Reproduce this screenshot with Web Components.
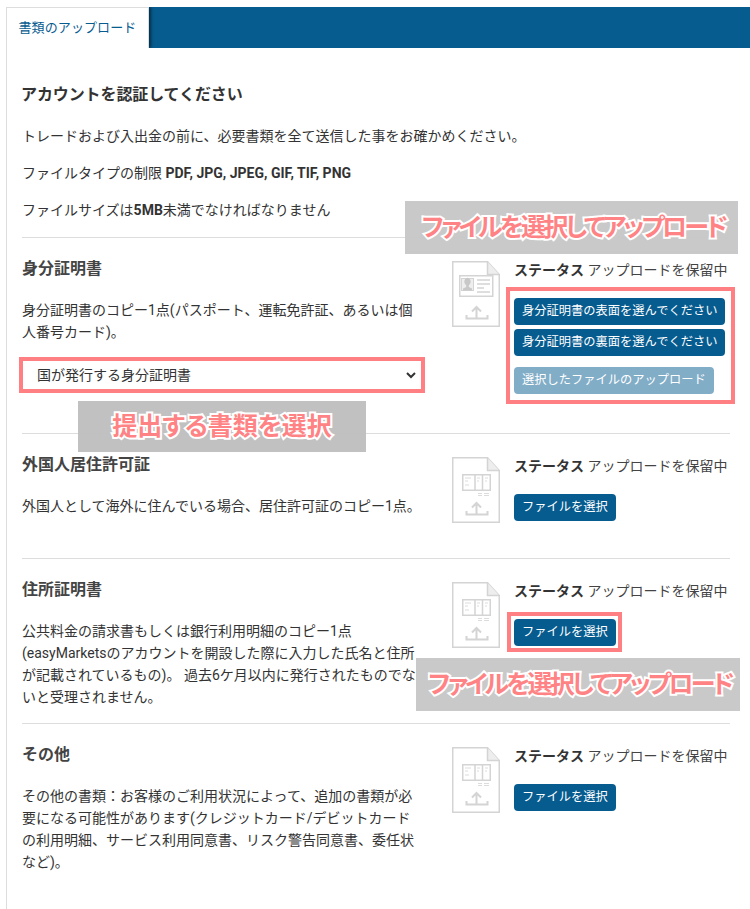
<!DOCTYPE html>
<html lang="ja">
<head>
<meta charset="utf-8">
<title>書類のアップロード</title>
<style>
    html, body { margin: 0; padding: 0; background: #fff; }
    body { font-family: Roboto, "Noto Sans CJK JP", sans-serif; color: #333; overflow: hidden; }
</style>
</head>
<body>
<doc-page>
    <doc-tabs slot="tabs" label="書類のアップロード"></doc-tabs>

    <doc-intro heading="アカウントを認証してください">
        <p>トレードおよび入出金の前に、必要書類を全て送信した事をお確かめください。</p>
        <p>ファイルタイプの制限 <b>PDF, JPG, JPEG, GIF, TIF, PNG</b></p>
        <p>ファイルサイズは<b>5MB</b>未満でなければなりません</p>
    </doc-intro>

    <doc-section heading="身分証明書" style="height:196px" icon="id">
        身分証明書のコピー1点(パスポート、運転免許証、あるいは個人番号カード)。
        <doc-select slot="extra" value="国が発行する身分証明書"></doc-select>
        <doc-actions slot="actions" marked="wide">
            <file-button>身分証明書の表面を選んでください</file-button>
            <file-button>身分証明書の裏面を選んでください</file-button>
            <file-button muted>選択したファイルのアップロード</file-button>
        </doc-actions>
    </doc-section>

    <doc-section heading="外国人居住許可証" icon="table" style="height:125px">
        外国人として海外に住んでいる場合、居住許可証のコピー1点。
        <doc-actions slot="actions">
            <file-button>ファイルを選択</file-button>
        </doc-actions>
    </doc-section>

    <doc-section heading="住所証明書" icon="table" style="height:165px">
        公共料金の請求書もしくは銀行利用明細のコピー1点 (easyMarketsのアカウントを開設した際に入力した氏名と住所が記載されているもの)。 過去6ケ月以内に発行されたものでないと受理されません。
        <doc-actions slot="actions" marked="narrow">
            <file-button>ファイルを選択</file-button>
        </doc-actions>
    </doc-section>

    <doc-section heading="その他" icon="table">
        その他の書類：お客様のご利用状況によって、追加の書類が必要になる可能性があります(クレジットカード/デビットカードの利用明細、サービス利用同意書、リスク警告同意書、委任状など)。
        <doc-actions slot="actions">
            <file-button>ファイルを選択</file-button>
        </doc-actions>
    </doc-section>

    <call-out slot="over" x="405" y="201" w="333" h="53" shade="#c8c8c8" tight>ファイルを選択してアップロード</call-out>
    <call-out slot="over" x="78" y="401" w="288" h="51" shade="#c0c0c0">提出する書類を選択</call-out>
    <call-out slot="over" x="416" y="658" w="324" h="53" shade="#c8c8c8" tight>ファイルを選択してアップロード</call-out>
</doc-page>

<script>
const ICON_FRAME = `
    <path d="M.75.75H35.5L47.25 13.5V65.25H.75Z"/>
    <path d="M35.5.75V13.5H47.25" fill="#eee"/>`;
const ICON_UPLOAD = `
    <path d="M24.5 57V46M20 50.5l4.5-4.5 4.5 4.5" stroke-width="2"/>
    <path d="M14.5 54v3.5h21V54" stroke-width="2"/>`;
const ICON_ART = {
    id: `
        <rect x="7.75" y="14.75" width="33" height="20.5" stroke-width="1.5"/>
        <rect x="9.5" y="17.5" width="12" height="12" fill="#eee" stroke-width="1"/>
        <path d="M11 29.5v-2l3.2-1.6v-1.6a3.2 4 0 1 1 2.6 0v1.6l3.2 1.6v2Z" fill="#c8c8c8" stroke="none"/>
        <path d="M25 19h13M25 23h13M25 27h7M25 31h13" stroke-width="1.6"/>`,
    table: `
        <rect x="10.75" y="17.75" width="27.5" height="15.5" stroke-width="1.5"/>
        <path d="M23 18v15M30.5 18v15" stroke-width="1.5"/>
        <path d="M13 21h6M13 24h3M13 28h4M25 21h3M25 24h2M33 21h3M33 24h2" stroke="#dcdcdc" stroke-width="1"/>
        <path d="M26 36.5h4M32 36.5h5M26 38.5h4M32 38.5h5" stroke="#dcdcdc" stroke-width="1"/>`
};

class DocPage extends HTMLElement {
    constructor(){
        super();
        this.attachShadow({ mode: 'open' });
        this.shadowRoot.innerHTML = `
            <style>
                :host { display: block; position: relative; width: 750px; height: 909px; padding-top: 7px; box-sizing: border-box; }
                #panel { margin-left: 6px; height: 861px; border-left: 1px solid #ddd; padding: 0 20px 0 15px; box-sizing: border-box; }
            </style>
            <slot name="tabs"></slot>
            <section id="panel"><slot></slot></section>
            <slot name="over"></slot>
        `;
    }
}

class DocTabs extends HTMLElement {
    constructor(){
        super();
        this.attachShadow({ mode: 'open' });
        this.shadowRoot.innerHTML = `
            <style>
                :host { display: flex; height: 41px; margin-left: 6px; background: #075c8f; overflow: hidden; }
                #tab {
                    width: 143px; box-sizing: border-box; padding-left: 11.5px;
                    background: #fff; color: #075c8f;
                    border: solid #ddd; border-width: 1px 1px 0 1px;
                    font-size: 13px; letter-spacing: .1px; line-height: 39px;
                    box-shadow: 2px 0 3px rgba(0, 0, 0, .5);
                }
            </style>
            <div id="tab">${this.getAttribute('label')}</div>
        `;
    }
}

class DocIntro extends HTMLElement {
    constructor(){
        super();
        this.attachShadow({ mode: 'open' });
        this.shadowRoot.innerHTML = `
            <style>
                :host { display: block; height: 189px; padding-top: 36px; box-sizing: border-box; font-size: 14px; line-height: 22px; }
                h2 { margin: 0 0 19px -1px; font-size: 16px; font-weight: 700; letter-spacing: -.1px; line-height: 22px; }
                ::slotted(p) { margin: 0 0 15px; }
            </style>
            <h2>${this.getAttribute('heading')}</h2>
            <slot></slot>
        `;
    }
}

class DocSection extends HTMLElement {
    constructor(){
        super();
        this.attachShadow({ mode: 'open' });
        this.shadowRoot.innerHTML = `
            <style>
                :host { display: grid; grid-template-columns: 400px 48px 1fr; column-gap: 30px; box-sizing: border-box; border-top: 1px solid #ddd; font-size: 14px; line-height: 22px; }
                #text { padding-top: 20px; }
                h3 { margin: 0 0 19px; font-size: 16px; font-weight: 700; line-height: 22px; color: #444; }
                doc-icon { margin-top: 23px; }
                #side { margin-left: -16px; padding-top: 21px; }
                #status { color: #444; white-space: nowrap; margin-bottom: 17px; }
                #status b { color: #333; font-size: 14px; }
            </style>
            <div id="text">
                <h3>${this.getAttribute('heading')}</h3>
                <slot></slot>
                <slot name="extra"></slot>
            </div>
            <doc-icon kind="${this.getAttribute('icon')}"></doc-icon>
            <div id="side">
                <div id="status"><b>ステータス</b> アップロードを保留中</div>
                <slot name="actions"></slot>
            </div>
        `;
    }
}

class DocIcon extends HTMLElement {
    constructor(){
        super();
        this.attachShadow({ mode: 'open' });
        const art = ICON_ART[this.getAttribute('kind')];
        this.shadowRoot.innerHTML = `
            <style>
                :host { display: block; width: 48px; height: 66px; }
                svg { display: block; fill: none; stroke: #d4d4d4; stroke-width: 1.5; }
            </style>
            <svg width="48" height="66" viewBox="0 0 48 66">${ICON_FRAME}${art}${ICON_UPLOAD}</svg>
        `;
    }
}

class DocSelect extends HTMLElement {
    constructor(){
        super();
        this.attachShadow({ mode: 'open' });
        const value = this.getAttribute('value');
        this.shadowRoot.innerHTML = `
            <style>
                :host { display: block; margin: 18px 0 0 1px; width: 398px; height: 28px; background: #fff; outline: 4px solid #ff7f82; }
                select {
                    display: block; width: 396px; height: 100%; border: 0; padding: 0 0 0 10px;
                    background: #fff; color: #333; outline: 0;
                    font: 14px Roboto, "Noto Sans CJK JP", sans-serif;
                }
            </style>
            <select><option>${value}</option></select>
        `;
    }
}

class DocActions extends HTMLElement {
    constructor(){
        super();
        this.attachShadow({ mode: 'open' });
        const marked = this.getAttribute('marked');
        // the red frame sits over the page, it does not push the buttons
        let frame = '';
        if(marked === 'wide') frame = ':host { width: 212px; } :host::after { inset: -11px -9px -10px -8px; }';
        if(marked === 'narrow') frame = ':host { width: 102px; } :host::after { inset: -7px -6px -6px -7px; }';
        this.shadowRoot.innerHTML = `
            <style>
                :host { display: flex; position: relative; flex-direction: column; align-items: flex-start; gap: 4px; }
                ::slotted([muted]) { margin-top: 7px; }
                ${frame ? ':host::after { content: ""; position: absolute; border: 4px solid #ff7f82; pointer-events: none; }' : ''}
                ${frame}
            </style>
            <slot></slot>
        `;
    }
}

class FileButton extends HTMLElement {
    constructor(){
        super();
        this.attachShadow({ mode: 'open' });
        this.shadowRoot.innerHTML = `
            <style>
                :host { display: block; box-sizing: border-box; height: 27px; padding: 0 8px; border-radius: 4px; background: #075c8f; color: #fff; font-size: 12.25px; font-weight: 400; line-height: 27px; white-space: nowrap; }
                :host([muted]) { background: #82adc7; }
            </style>
            <slot></slot>
        `;
    }
}

class CallOut extends HTMLElement {
    constructor(){
        super();
        this.attachShadow({ mode: 'open' });
        const a = name => this.getAttribute(name);
        this.shadowRoot.innerHTML = `
            <style>
                :host {
                    position: absolute; left: ${a('x')}px; top: ${a('y')}px; width: ${a('w')}px; height: ${a('h')}px;
                    display: flex; align-items: center; justify-content: center;
                    background: ${a('shade')}; opacity: .97;
                    color: #ff7f82; font-size: 25px; font-weight: 700; line-height: 1; white-space: nowrap;
                    font-feature-settings: "palt";
                    -webkit-text-stroke: 4px #fff; paint-order: stroke fill;
                }
                :host([tight]) { letter-spacing: -2.8px; padding-left: 4px; box-sizing: border-box; }
            </style>
            <slot></slot>
        `;
    }
}

customElements.define('doc-page', DocPage);
customElements.define('doc-tabs', DocTabs);
customElements.define('doc-intro', DocIntro);
customElements.define('doc-section', DocSection);
customElements.define('doc-icon', DocIcon);
customElements.define('doc-select', DocSelect);
customElements.define('doc-actions', DocActions);
customElements.define('file-button', FileButton);
customElements.define('call-out', CallOut);
</script>
</body>
</html>
